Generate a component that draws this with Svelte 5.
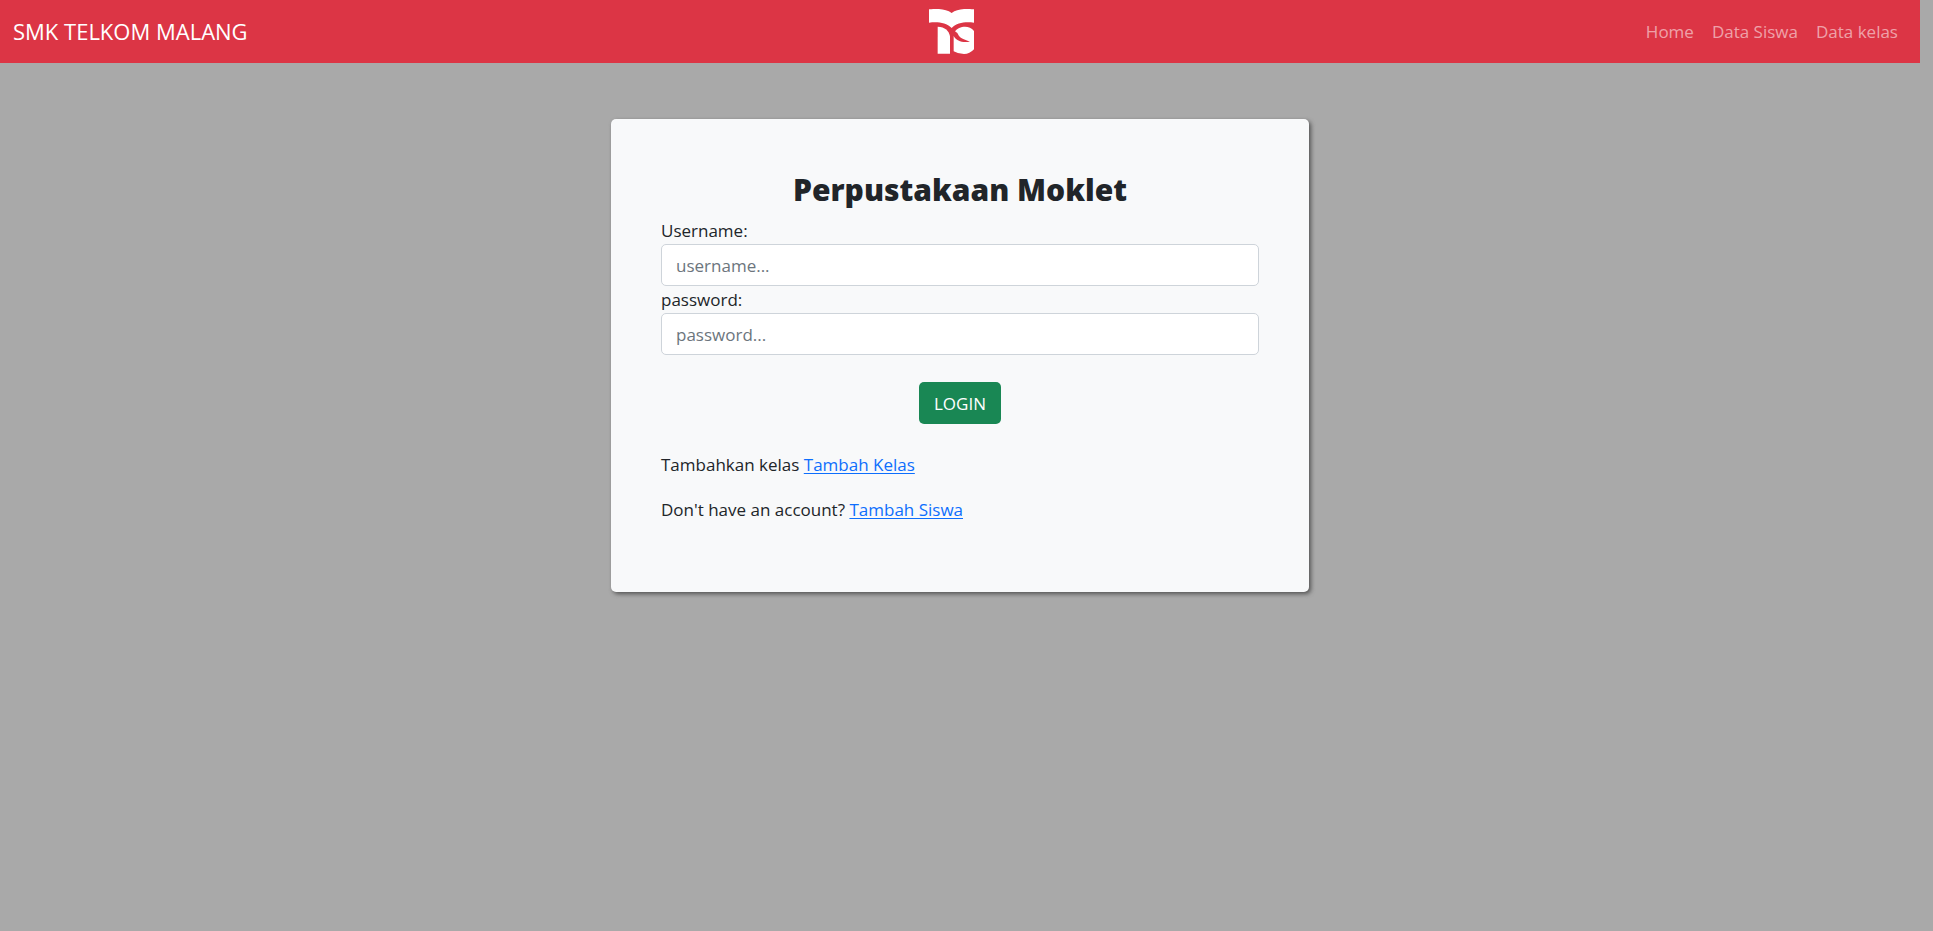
<script>
  let username = $state('');
  let password = $state('');
  const links = ['Home', 'Data Siswa', 'Data kelas'];
</script>

<header>
  <nav>
    <a class="brand" href="#home">SMK TELKOM MALANG</a>
    <svg class="logo" viewBox="0 0 135 135" role="img" aria-label="Moklet logo">
      <path d="M0 1C29-2 51 0 68 12C84 0 106-2 135 1V41C107 38 84 41 68 57C51 41 28 38 0 41Z" />
      <path d="M26 53C48 54 60 65 63 82V134H26Z" />
      <path d="M78 67C88 53 119 45 135 66V121Q122 135 105 135Q87 135 74 127V81C83 97 101 102 123 98C107 92 96 89 90 81Q86 71 78 67Z" />
    </svg>
    <div class="links">
      {#each links as link}
        <a href="#menu">{link}</a>
      {/each}
    </div>
  </nav>
</header>

<main>
  <section class="card">
    <h1>Perpustakaan Moklet</h1>
    <form onsubmit={(e) => e.preventDefault()}>
      <label for="username">Username:</label>
      <input id="username" type="text" placeholder="username..." bind:value={username} />
      <label for="password">password:</label>
      <input id="password" type="password" placeholder="password..." bind:value={password} />
      <button type="submit">LOGIN</button>
    </form>
    <p>Tambahkan kelas <a href="#kelas">Tambah Kelas</a></p>
    <p>Don't have an account? <a href="#siswa">Tambah Siswa</a></p>
  </section>
</main>

<style>
  :global(body) {
    margin: 0;
    padding-right: 13px;
    background: #a9a9a9;
    color: #212529;
    font: 17px/27px 'Open Sans', sans-serif;
  }
  :global(*) { box-sizing: border-box; }
  nav {
    display: flex;
    justify-content: space-between;
    align-items: center;
    height: 63px;
    padding: 0 22px 0 13px;
    background: #dc3545;
  }
  nav a { text-decoration: none; }
  .brand { padding-right: 18px; color: #fff; font-size: 22px; }
  .logo { width: 45px; height: 45px; fill: #fff; }
  .links { display: flex; gap: 18px; padding-left: 9px; }
  .links a { color: rgba(255, 255, 255, 0.55); }
  main { padding: 56px 16px; }
  .card {
    max-width: 698px;
    margin: 0 auto;
    padding: 51px 50px 69px;
    border-radius: 5px;
    background: #f8f9fa;
    box-shadow: 2px 2px 4px #555;
  }
  h1 {
    margin: 0 0 7px;
    font-size: 30px;
    line-height: 40px;
    font-weight: 800;
    text-align: center;
  }
  form { display: flex; flex-direction: column; }
  input {
    width: 100%;
    height: 42px;
    padding: 0 14px;
    border: 1px solid #ced4da;
    border-radius: 5px;
    background: #fff;
    color: #212529;
    font: inherit;
  }
  input::placeholder { color: #6c757d; opacity: 1; }
  button {
    align-self: center;
    height: 42px;
    margin: 27px 0;
    padding: 0 15px;
    border: 0;
    border-radius: 5px;
    background: #198754;
    color: #fff;
    font: inherit;
  }
  p { margin: 0 0 18px; }
  p:last-child { margin: 0; }
  p a { color: #0d6efd; text-underline-offset: 2px; }
</style>
